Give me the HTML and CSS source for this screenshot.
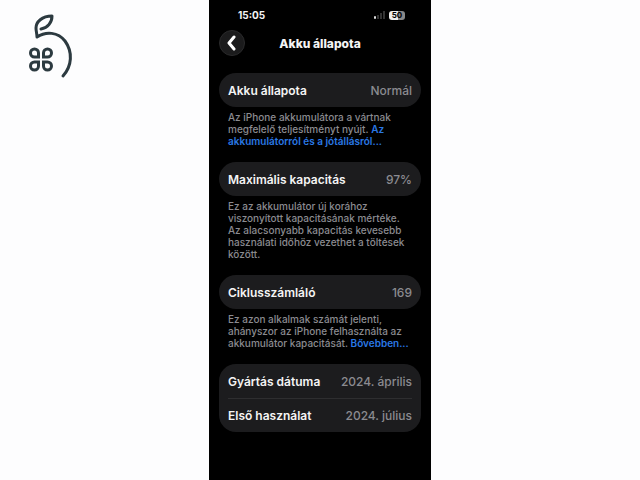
FILE: index.html
```html
<!DOCTYPE html>
<html lang="hu">
<head>
    <meta charset="UTF-8">
    <meta name="viewport" content="width=device-width, initial-scale=1.0">
    <title>Akku állapota</title>
    <link rel="stylesheet" href="styles.css">
</head>
<body>

    <div class="page">
        <div class="brand">
            <svg class="logo" width="48" height="66" viewBox="0 0 48 66" aria-label="Logo">
                <path d="M13 16C20 15 24 9 24 3C14 3 8 9 8 15C8 18 9 21 9 24C18 18 30 19 37 28C45 39 44 53 35 63"/>
                <path class="petals" d="M10.500 44H6.500A4 4 0 1 1 10.500 40ZM15.500 44V40A4 4 0 1 1 19.500 44ZM10.500 49V53A4 4 0 1 1 6.500 49ZM15.500 49H19.500A4 4 0 1 1 15.500 53Z"/>
            </svg>
        </div>

        <main class="phone">
            <div class="status">
                <span>15:05</span>
                <span class="status-icons">
                    <svg width="12" height="8" viewBox="0 0 12 8">
                        <rect x="0" y="5" width="2" height="3" rx="1" fill="#ddd"/>
                        <rect x="3" y="4" width="2" height="4" fill="#333"/>
                        <rect x="6" y="2" width="2" height="6" fill="#333"/>
                        <rect x="9" y="0" width="2" height="8" fill="#333"/>
                    </svg>
                    <span class="battery">50</span>
                </span>
            </div>

            <header class="nav">
                <button class="back" type="button" aria-label="Vissza">
                    <svg width="10" height="16" viewBox="0 0 10 16"><path d="M7 2L2 8L7 14"/></svg>
                </button>
                <h1>Akku állapota</h1>
            </header>

            <section>
                <dl class="card">
                    <div class="row"><dt>Akku állapota</dt><dd>Normál</dd></div>
                </dl>
                <p class="note">Az iPhone akkumulátora a vártnak<br>megfelelő teljesítményt nyújt. <a href="#">Az<br>akkumulátorról és a jótállásról...</a></p>
            </section>

            <section>
                <dl class="card">
                    <div class="row"><dt>Maximális kapacitás</dt><dd>97%</dd></div>
                </dl>
                <p class="note">Ez az akkumulátor új korához<br>viszonyított kapacitásának mértéke.<br>Az alacsonyabb kapacitás kevesebb<br>használati időhöz vezethet a töltések<br>között.</p>
            </section>

            <section>
                <dl class="card">
                    <div class="row"><dt>Ciklusszámláló</dt><dd>169</dd></div>
                </dl>
                <p class="note">Ez azon alkalmak számát jelenti,<br>ahányszor az iPhone felhasználta az<br>akkumulátor kapacitását. <a href="#">Bővebben...</a></p>
            </section>

            <section>
                <dl class="card">
                    <div class="row"><dt>Gyártás dátuma</dt><dd>2024. április</dd></div>
                    <div class="row"><dt>Első használat</dt><dd>2024. július</dd></div>
                </dl>
            </section>
        </main>
    </div>

</body>
</html>
```
FILE: styles.css
```css
* {
    margin: 0;
    padding: 0;
    box-sizing: border-box;
}

body {
    background: #fdfdfe;
    font-family: Inter, "Liberation Sans", sans-serif;
}

.page {
    display: grid;
    grid-template-columns: 1fr 222px 1fr;
    min-height: 100vh;
}

.brand {
    padding: 13px 28px;
}

.logo {
    display: block;
    fill: none;
    stroke: #2c3a40;
    stroke-width: 3;
    stroke-linecap: round;
    stroke-linejoin: round;
}

.petals {
    stroke-linejoin: miter;
}

.phone {
    background: #000;
    color: #f4f4f4;
    padding: 7px 10px;
}

/* status bar */
.status {
    display: flex;
    justify-content: space-between;
    align-items: center;
    height: 16px;
    padding: 0 16px 0 19px;
    font-size: 10px;
    font-weight: 700;
}

.status-icons {
    display: flex;
    align-items: center;
    gap: 3px;
}

.battery {
    width: 16px;
    border-radius: 3px;
    background: linear-gradient(to right, #eee 55%, #888 55%);
    color: #000;
    font-size: 8px;
    line-height: 9px;
    text-align: center;
}

/* title row */
.nav {
    display: grid;
    grid-template-columns: 26px 1fr 26px;
    align-items: center;
    margin: 7px 0 17px;
}

.nav h1 {
    font-size: 12px;
    font-weight: 800;
    text-align: center;
}

.back {
    display: flex;
    align-items: center;
    justify-content: center;
    width: 26px;
    height: 26px;
    border: 1px solid #2a2a2b;
    border-radius: 50%;
    background: #1b1b1c;
}

.back svg {
    fill: none;
    stroke: #fff;
    stroke-width: 3;
    stroke-linecap: round;
    stroke-linejoin: round;
}

/* settings cards */
.card {
    padding: 0 9px;
    border-radius: 17px;
    background: #1c1c1e;
    font-size: 12px;
}

.row {
    display: flex;
    justify-content: space-between;
    align-items: center;
    height: 34px;
}

.row + .row {
    border-top: 1px solid #2e2e30;
}

.row dt {
    font-weight: 600;
}

.row dd {
    color: #8b8b90;
    font-weight: 500;
}

.note {
    padding: 4px 9px 15px;
    color: #8b8b90;
    font-size: 10px;
    font-weight: 500;
    line-height: 12px;
    white-space: nowrap;
}

.note a {
    color: #2a78e4;
    font-weight: 600;
    text-decoration: none;
}
```
